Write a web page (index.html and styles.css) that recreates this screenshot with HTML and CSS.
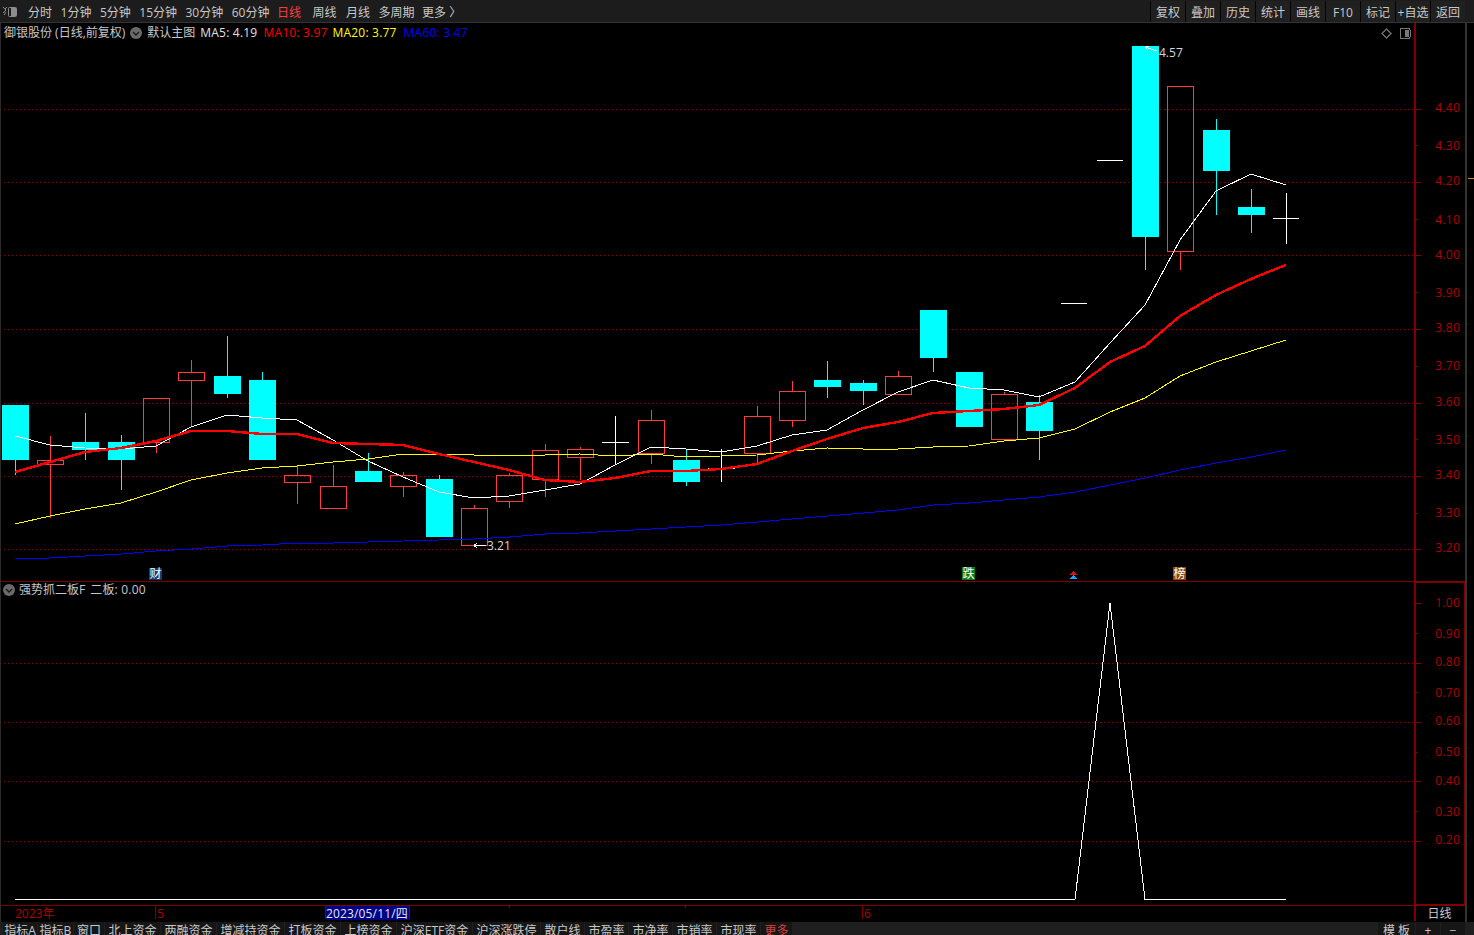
FILE: index.html
```html
<!DOCTYPE html>
<html lang="zh">
<head>
<meta charset="utf-8">
<title>御银股份</title>
<link rel="stylesheet" href="styles.css">
</head>
<body>
<div class="app">
  <header class="topbar">
    <svg class="logo" width="18" height="14" viewBox="0 0 18 14">
      <path class="logo-x" d="M2 2l3 3-3 3M6 2l-2 2M5 7l-2 3"/>
      <rect class="logo-box" x="7.5" y="2.5" width="8" height="9" rx="1"/>
      <rect class="logo-fill" x="10" y="3" width="5" height="8"/>
    </svg>
    <nav class="periods">
      <span>分时</span><span>1分钟</span><span>5分钟</span><span>15分钟</span><span>30分钟</span><span>60分钟</span>
      <span class="active">日线</span><span class="wk">周线</span><span class="mo">月线</span><span>多周期</span><span class="last">更多 〉</span>
    </nav>
    <nav class="tools">
      <span>复权</span><span>叠加</span><span>历史</span><span>统计</span><span>画线</span><span>F10</span><span>标记</span><span>+自选</span><span>返回</span>
    </nav>
    <div class="strip"></div>
  </header>

  <main class="stage">
    <svg class="chart" width="1474" height="899" viewBox="0 23 1474 899">
      <!-- grid -->
      <g class="grid">
        <line x1="0" y1="109.5" x2="1415" y2="109.5"/><line x1="0" y1="182.5" x2="1415" y2="182.5"/>
        <line x1="0" y1="255.5" x2="1415" y2="255.5"/><line x1="0" y1="329.5" x2="1415" y2="329.5"/>
        <line x1="0" y1="403.5" x2="1415" y2="403.5"/><line x1="0" y1="476.5" x2="1415" y2="476.5"/>
        <line x1="0" y1="549.5" x2="1415" y2="549.5"/><line x1="0" y1="663.5" x2="1415" y2="663.5"/>
        <line x1="0" y1="722.5" x2="1415" y2="722.5"/><line x1="0" y1="781.5" x2="1415" y2="781.5"/>
        <line x1="0" y1="841.5" x2="1415" y2="841.5"/>
      </g>
      <!-- frames -->
      <path class="frame" d="M0 581.5H1465M0 905.5H1465M155.5 905V919M325.5 905V919M409.5 905V919M862.5 905V919M509.5 905V908M685.5 905V908"/>
      <path class="frame-bold" d="M1415 23V921M1415 581.5H1465M1464.5 581V905M1415 905H1465"/>
      <path class="ticks" d="M1415 109.5H1421M1415 145.5H1418M1415 182.5H1421M1415 219.5H1418M1415 255.5H1421M1415 292.5H1418M1415 329.5H1421M1415 366.5H1418M1415 403.5H1421M1415 439.5H1418M1415 476.5H1421M1415 513.5H1418M1415 549.5H1421M1415 603.5H1421M1415 633.5H1418M1415 663.5H1421M1415 692.5H1418M1415 722.5H1421M1415 752.5H1418M1415 781.5H1421M1415 811.5H1418M1415 841.5H1421"/>
      <path class="left-edge" d="M0.5 23V922"/>
      <path class="right-edge" d="M1466 23V922"/>
      <path class="orange" d="M1468 178.5H1474"/>

      <!-- candles: wicks -->
      <path class="wick-cyan" d="M15.5 460V475M85.5 413V442M85.5 450V460M121.5 435V442M121.5 460V490M227.5 336V376M227.5 394V398M262.5 372V380M368.5 453V471M439.5 475V479M686.5 449V460M686.5 482V486M827.5 361V380M827.5 387V398M863.5 380V383M863.5 391V405M933.5 358V372M1039.5 395V402M1039.5 431V460M1145.5 237V270M1216.5 119V130M1216.5 171V215M1251.5 189V207M1251.5 215V233"/>
      <path class="wick-red" d="M50.5 436V460M50.5 465V518M156.5 442V453M191.5 360V372M191.5 381V427M297.5 466V475M297.5 483V504M333.5 465V486M403.5 472V475M403.5 487V497M474.5 505V508M509.5 473V475M509.5 502V508M545.5 444V450M545.5 480V497M580.5 447V449M580.5 458V480M651.5 410V420M651.5 454V464M757.5 406V416M757.5 454V464M792.5 381V391M792.5 420V427M898.5 371V376M1004.5 392V394M1004.5 439V441M1180.5 251V270"/>
      <path class="wick-white" d="M615.5 416V464M602 442.5H629M721.5 449V482M708 468.5H735M1061 303.5H1087M1097 160.5H1123M1286.5 193V244M1273 218.5H1299"/>

      <!-- candles: bodies -->
      <g class="cyan">
        <rect x="2" y="405" width="27" height="55"/><rect x="72" y="442" width="27" height="8"/>
        <rect x="108" y="442" width="27" height="18"/><rect x="214" y="376" width="27" height="18"/>
        <rect x="249" y="380" width="27" height="80"/><rect x="355" y="471" width="27" height="11"/>
        <rect x="426" y="479" width="27" height="58"/><rect x="673" y="460" width="27" height="22"/>
        <rect x="814" y="380" width="27" height="7"/><rect x="850" y="383" width="27" height="8"/>
        <rect x="920" y="310" width="27" height="48"/><rect x="956" y="372" width="27" height="55"/>
        <rect x="1026" y="402" width="27" height="29"/><rect x="1132" y="46" width="27" height="191"/>
        <rect x="1203" y="130" width="27" height="41"/><rect x="1238" y="207" width="27" height="8"/>
      </g>
      <g class="hollow">
        <rect x="37.5" y="460.5" width="26" height="4"/><rect x="143.5" y="398.5" width="26" height="44"/>
        <rect x="178.5" y="372.5" width="26" height="8"/><rect x="284.5" y="475.5" width="26" height="7"/>
        <rect x="320.5" y="486.5" width="26" height="22"/><rect x="390.5" y="475.5" width="26" height="11"/>
        <rect x="461.5" y="508.5" width="26" height="37"/><rect x="496.5" y="475.5" width="26" height="26"/>
        <rect x="532.5" y="450.5" width="26" height="29"/><rect x="567.5" y="449.5" width="26" height="8"/>
        <rect x="638.5" y="420.5" width="26" height="33"/><rect x="744.5" y="416.5" width="26" height="37"/>
        <rect x="779.5" y="391.5" width="26" height="29"/><rect x="885.5" y="376.5" width="26" height="18"/>
        <rect x="991.5" y="394.5" width="26" height="45"/><rect x="1167.5" y="86.5" width="26" height="165"/>
      </g>

      <!-- moving averages -->
      <polyline class="ma60" points="15,559 50,558 85,556 121,554 156,551 191,549 227,546 262,545 297,543 333,543 368,542 403,541 439,540 474,539 509,537 545,534 580,533 615,531 651,529 686,527 721,525 757,522 792,519 827,516 863,513 898,510 933,505 969,503 1004,500 1039,497 1075,492 1110,485 1145,478 1180,470 1216,463 1251,457 1286,450"/>
      <polyline class="ma20" points="15,524 50,516 85,509 121,503 156,492 191,480 227,473 262,468 297,466 333,462 368,459 403,454 439,454 474,455 509,455 545,455 580,454 615,456 651,454 686,457 721,456 757,455 792,451 827,448 863,449 898,449 933,447 969,446 1004,441 1039,438 1075,429 1110,412 1145,398 1180,376 1216,362 1251,351 1286,340"/>
      <polyline class="ma5" points="15,436 50,445 85,448 121,449 156,446 191,427 227,415 262,418 297,420 333,440 368,461 403,477 439,492 474,498 509,496 545,490 580,484 615,465 651,447 686,449 721,452 757,446 792,435 827,430 863,410 898,392 933,380 969,388 1004,390 1039,397 1075,382 1110,343 1145,305 1180,240 1216,191 1251,174 1286,185"/>
      <polyline class="ma10" points="15,472 50,462 85,452 121,448 156,441 191,431 227,431 262,434 297,434 333,443 368,444 403,445 439,454 474,462 509,470 545,480 580,482 615,478 651,471 686,471 721,469 757,464 792,451 827,439 863,428 898,422 933,413 969,411 1004,409 1039,405 1075,388 1110,362 1145,346 1180,316 1216,295 1251,279 1286,265"/>
      <polyline class="signal" points="15,899.5 1075,899.5 1110,603 1145,899.5 1286,899.5"/>

      <!-- extremes -->
      <path class="note-line" d="M1145 47L1157 51M1145 47L1149 46M1145 47L1148 50M474 545.5H486M474 545.5L477 543M474 545.5L477 548"/>
      <text class="note" x="1159" y="57">4.57</text>
      <text class="note" x="487" y="550">3.21</text>

      <!-- price axis -->
      <g class="axis">
        <text x="1460" y="112">4.40</text><text x="1460" y="150">4.30</text><text x="1460" y="185">4.20</text>
        <text x="1460" y="224">4.10</text><text x="1460" y="259">4.00</text><text x="1460" y="297">3.90</text>
        <text x="1460" y="332">3.80</text><text x="1460" y="370">3.70</text><text x="1460" y="406">3.60</text>
        <text x="1460" y="444">3.50</text><text x="1460" y="479">3.40</text><text x="1460" y="517">3.30</text>
        <text x="1460" y="552">3.20</text>
        <text x="1460" y="607">1.00</text><text x="1460" y="638">0.90</text><text x="1460" y="666">0.80</text>
        <text x="1460" y="697">0.70</text><text x="1460" y="725">0.60</text><text x="1460" y="756">0.50</text>
        <text x="1460" y="785">0.40</text><text x="1460" y="816">0.30</text><text x="1460" y="844">0.20</text>
      </g>

      <!-- event markers -->
      <rect class="tag-blue" x="149" y="568" width="13" height="12"/>
      <text class="tag-text" x="155.5" y="578">财</text>
      <rect class="tag-green" x="962" y="567" width="13" height="13"/>
      <text class="tag-text" x="968.5" y="578">跌</text>
      <rect class="tag-brown" x="1173" y="567" width="13" height="13"/>
      <text class="tag-text" x="1179.5" y="578">榜</text>
      <polygon class="arrow-red" points="1073.5,571 1077.5,575 1069.5,575"/>
      <polygon class="arrow-blue" points="1073.5,575 1077,579 1070,579"/>

      <!-- date axis -->
      <rect class="date-box" x="326" y="906" width="83" height="14"/>
      <text class="date-red" x="15" y="918">2023年</text>
      <text class="date-red" x="157" y="918">5</text>
      <text class="date-red" x="864" y="918">6</text>
      <text class="date-white" x="326" y="918">2023/05/11/四</text>
      <text class="date-unit" x="1439.5" y="918">日线</text>

      <!-- chart icons -->
      <path class="ico-line" d="M1386.5 29L1391 33.5L1386.5 38L1382 33.5Z"/>
      <rect class="ico-line2" x="1400" y="28.5" width="10" height="10" rx="1.5"/>
      <rect class="ico-fill" x="1405" y="30" width="4" height="7"/>
    </svg>

    <div class="legend legend-main">
      <span class="name">御银股份 (日线,前复权)</span>
      <svg class="drop" width="12" height="12" viewBox="0 0 12 12"><circle cx="6" cy="6" r="6"/><path d="M3 5l3 3 3-3"/></svg>
      <span class="name">默认主图</span>
      <span class="ma-w">MA5: 4.19</span>
      <span class="ma-r">MA10: 3.97</span>
      <span class="ma-y">MA20: 3.77</span>
      <span class="ma-b">MA60: 3.47</span>
    </div>
    <div class="legend legend-sub">
      <svg class="drop" width="12" height="12" viewBox="0 0 12 12"><circle cx="6" cy="6" r="6"/><path d="M3 5l3 3 3-3"/></svg>
      <span class="name">强势抓二板F</span>
      <span class="name value">二板: 0.00</span>
    </div>
  </main>

  <footer class="tabs">
    <span class="t34">指标A</span><span class="t35">指标B</span><span class="t30">窗口</span>
    <span class="t55">北上资金</span><span class="t55">两融资金</span><span class="t67">增减持资金</span>
    <span class="t55">打板资金</span><span class="t55">上榜资金</span><span class="t75">沪深ETF资金</span>
    <span class="t67">沪深涨跌停</span><span class="t43">散户线</span><span class="t43">市盈率</span>
    <span class="t43">市净率</span><span class="t43">市销率</span><span class="t43">市现率</span>
    <span class="t31 more">更多</span>
    <span class="tail"></span>
    <span class="t37">模 板</span><span class="t24">+</span><span class="t24">−</span>
    <span class="endcap"></span>
  </footer>
</div>
</body>
</html>
```

FILE: styles.css
```css
* { box-sizing: border-box; }
html, body { margin: 0; padding: 0; background: #000; }
body { font: 12px/16px "Open Sans", "Noto Sans CJK SC", sans-serif; color: #c8c8c8; overflow: hidden; }
.app { width: 1474px; height: 935px; display: flex; flex-direction: column; overflow: hidden; }

/* top bar */
.topbar { height: 23px; flex: none; display: flex; align-items: stretch; background: #1c1c1c; border-bottom: 1px solid #333; }
.logo { flex: none; margin: 5px 0 0 1px; }
.logo-x { fill: none; stroke: #8c8c8c; stroke-width: 1; }
.logo-box { fill: none; stroke: #8c8c8c; }
.logo-fill { fill: #8c8c8c; }
.periods { display: flex; gap: 8.5px; padding: 5px 0 0 9px; white-space: nowrap; }
.periods .active { color: #ff3c3c; margin-left: -1px; }
.periods .wk { margin-left: 3px; }
.periods .mo { margin-left: 1px; }
.periods .last { margin-left: -1px; }
.tools { margin-left: auto; display: flex; padding-top: 1px; }
.tools span { width: 35px; text-align: center; padding-top: 4px; border-left: 1px solid #050505; white-space: nowrap; background: #202020; }
.strip { width: 9px; flex: none; background: #1c1c1c; }

/* chart */
.stage { position: relative; height: 899px; flex: none; }
.chart { display: block; }
.chart text { font-family: "Open Sans", "Noto Sans CJK SC", sans-serif; font-size: 12px; }
.chart path, .chart polyline, .chart rect, .chart polygon, .chart line { shape-rendering: crispEdges; }
.grid line { stroke: #900000; stroke-width: 1; stroke-dasharray: 1 3; }
.frame { fill: none; stroke: #800000; stroke-width: 1; }
.frame-bold { fill: none; stroke: #800000; stroke-width: 2; }
.ticks { fill: none; stroke: #800000; stroke-width: 1; }
.left-edge { fill: none; stroke: #2c2c2c; stroke-width: 1; }
.right-edge { fill: none; stroke: #333; stroke-width: 2; }
.orange { fill: none; stroke: #c88a1e; stroke-width: 1; }
.wick-cyan { fill: none; stroke: #00ffff; stroke-width: 1; }
.wick-red { fill: none; stroke: #ff3c3c; stroke-width: 1; }
.wick-white { fill: none; stroke: #fff; stroke-width: 1; }
.cyan rect { fill: #00ffff; }
.hollow rect { fill: none; stroke: #ff3c3c; stroke-width: 1; }
.ma5, .ma10, .ma20, .ma60, .signal { fill: none; }
.ma5 { stroke: #fff; stroke-width: 1; }
.ma10 { stroke: #ff0000; stroke-width: 2.4; }
.ma20 { stroke: #ffff00; stroke-width: 1; }
.ma60 { stroke: #0000ff; stroke-width: 1; }
.signal { stroke: #fff; stroke-width: 1; }
.note-line { fill: none; stroke: #fff; stroke-width: 1; }
.note { fill: #d8d8d8; }
.chart .axis text { fill: #b00000; text-anchor: end; letter-spacing: .25px; }
.tag-blue { fill: #0f3c6e; }
.tag-green { fill: #0a7a14; }
.tag-brown { fill: #8a4a12; }
.chart .tag-text { fill: #fff; text-anchor: middle; font-size: 12px; }
.arrow-red { fill: #e01010; }
.arrow-blue { fill: #10a8ff; }
.date-box { fill: #000088; }
.date-red { fill: #b00000; }
.date-white { fill: #e8e8e8; letter-spacing: .15px; }
.date-unit { fill: #c8c8c8; text-anchor: middle; }
.ico-line { fill: none; stroke: #666; stroke-width: 1; }
.ico-line2 { fill: none; stroke: #777; stroke-width: 1; }
.ico-fill { fill: #777; }

/* legends over the chart */
.legend { position: absolute; display: flex; align-items: center; white-space: nowrap; }
.legend-main { left: 4px; top: 2px; }
.legend-sub { left: 3px; top: 559px; }
.drop { flex: none; }
.drop circle { fill: #6a6a6a; }
.drop path { fill: none; stroke: #1a1a1a; stroke-width: 1.4; }
.name { color: #c8c8c8; }
.legend-main .drop { margin: 0 5px 0 5px; }
.legend-main .ma-w, .legend-main .ma-r, .legend-main .ma-y, .legend-main .ma-b { letter-spacing: .2px; }
.legend-main .ma-w { margin-left: 5px; color: #e0e0e0; }
.legend-main .ma-r { margin-left: 6px; color: #ff0000; }
.legend-main .ma-y { margin-left: 5px; color: #ffff00; }
.legend-main .ma-b { margin-left: 7px; color: #0000ff; }
.legend-sub .drop { margin-right: 4px; }
.legend-sub .value { margin-left: 5px; letter-spacing: .2px; }

/* bottom tabs */
.tabs { height: 13px; flex: none; display: flex; padding-left: 3px; gap: 1px; background: #1f1f1f; overflow: hidden; }
.tabs span { background: #161616; text-align: center; white-space: nowrap; line-height: 16px; padding-top: 1px; height: 13px; flex: none; overflow: visible; }
.tabs .tail { flex: 1; background: #1f1f1f; }
.tabs .more { color: #d84040; }
.tabs .endcap { width: 8px; background: #1f1f1f; }
.t24 { width: 24px; }
.t30 { width: 30px; }
.t31 { width: 31px; }
.t34 { width: 34px; }
.t35 { width: 35px; }
.t37 { width: 37px; }
.t43 { width: 43px; }
.t55 { width: 55px; }
.t67 { width: 67px; }
.t75 { width: 75px; }
```
